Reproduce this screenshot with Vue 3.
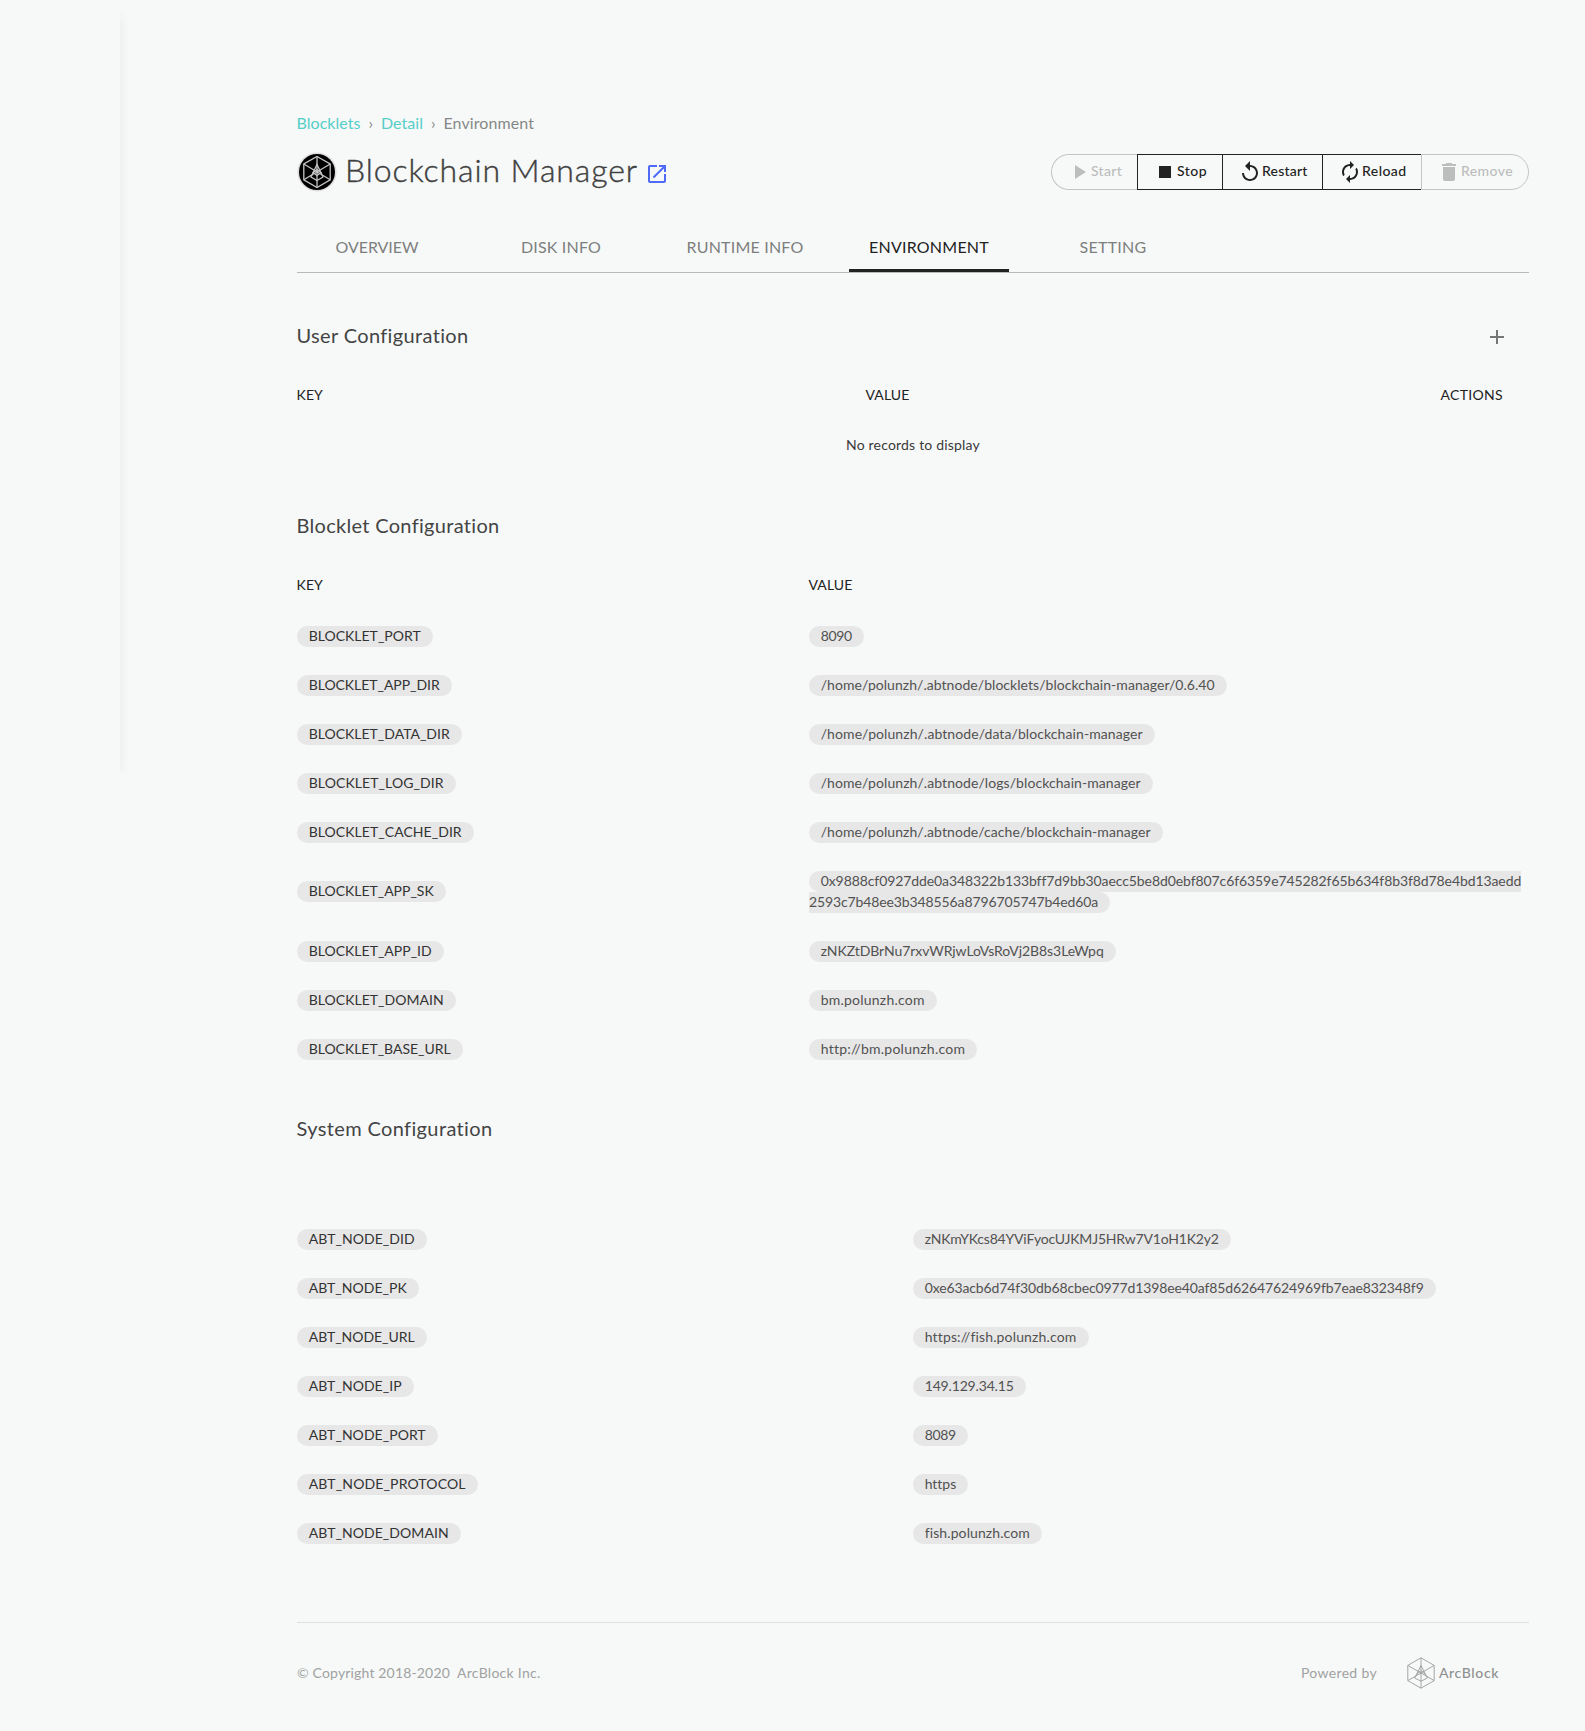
<script setup>
// Spreads the letters of an element so that its text takes the given width.
const vTrack = {
  mounted(el, { value }) {
    const natural = el.getBoundingClientRect().width
    el.style.letterSpacing = `${(value - natural) / el.textContent.length}px`
  },
}

const actions = [
  { label: 'Start', track: 31, disabled: true, icon: 'M8 5v14l11-7z' },
  { label: 'Stop', track: 30, icon: 'M6 6h12v12H6z' },
  {
    label: 'Restart',
    track: 45.5,
    icon: 'M12 5V1L7 6l5 5V7c3.31 0 6 2.69 6 6s-2.69 6-6 6-6-2.69-6-6H4c0 4.42 3.58 8 8 8s8-3.58 8-8-3.58-8-8-8z',
  },
  {
    label: 'Reload',
    track: 44.5,
    icon: 'M12 6v3l4-4-4-4v3c-4.42 0-8 3.58-8 8 0 1.57.46 3.03 1.24 4.26L6.7 14.8c-.45-.83-.7-1.79-.7-2.8 0-3.31 2.69-6 6-6zm6.76 1.74L17.3 9.2c.44.84.7 1.79.7 2.8 0 3.31-2.69 6-6 6v-3l-4 4 4 4v-3c4.42 0 8-3.58 8-8 0-1.57-.46-3.03-1.24-4.26z',
  },
  {
    label: 'Remove',
    track: 52,
    disabled: true,
    icon: 'M6 19c0 1.1.9 2 2 2h8c1.1 0 2-.9 2-2V7H6v12zM19 4h-3.5l-1-1h-5l-1 1H5v2h14V4z',
  },
]

const tabs = [
  { label: 'OVERVIEW', track: 83 },
  { label: 'DISK INFO', track: 80 },
  { label: 'RUNTIME INFO', track: 117 },
  { label: 'ENVIRONMENT', track: 120, active: true },
  { label: 'SETTING', track: 67 },
]

const blockletRows = [
  { key: 'BLOCKLET_PORT', keyTrack: 112, value: [['8090', 31]] },
  { key: 'BLOCKLET_APP_DIR', keyTrack: 131, value: [['/home/polunzh/.abtnode/blocklets/blockchain-manager/0.6.40', 394]] },
  { key: 'BLOCKLET_DATA_DIR', keyTrack: 141, value: [['/home/polunzh/.abtnode/data/blockchain-manager', 322]] },
  { key: 'BLOCKLET_LOG_DIR', keyTrack: 135, value: [['/home/polunzh/.abtnode/logs/blockchain-manager', 320]] },
  { key: 'BLOCKLET_CACHE_DIR', keyTrack: 153, value: [['/home/polunzh/.abtnode/cache/blockchain-manager', 330]] },
  {
    key: 'BLOCKLET_APP_SK',
    keyTrack: 125,
    value: [
      ['0x9888cf0927dde0a348322b133bff7d9bb30aecc5be8d0ebf807c6f6359e745282f65b634f8b3f8d78e4bd13aedd', 700],
      ['2593c7b48ee3b348556a8796705747b4ed60a', 289],
    ],
  },
  { key: 'BLOCKLET_APP_ID', keyTrack: 123, value: [['zNKZtDBrNu7rxvWRjwLoVsRoVj2B8s3LeWpq', 283]] },
  { key: 'BLOCKLET_DOMAIN', keyTrack: 135, value: [['bm.polunzh.com', 104]] },
  { key: 'BLOCKLET_BASE_URL', keyTrack: 142, value: [['http://bm.polunzh.com', 144]] },
]

const systemRows = [
  { key: 'ABT_NODE_DID', keyTrack: 106, value: [['zNKmYKcs84YViFyocUJKMJ5HRw7V1oH1K2y2', 294]] },
  { key: 'ABT_NODE_PK', keyTrack: 98, value: [['0xe63acb6d74f30db68cbec0977d1398ee40af85d62647624969fb7eae832348f9', 499]] },
  { key: 'ABT_NODE_URL', keyTrack: 106, value: [['https://fish.polunzh.com', 151]] },
  { key: 'ABT_NODE_IP', keyTrack: 93, value: [['149.129.34.15', 89]] },
  { key: 'ABT_NODE_PORT', keyTrack: 117, value: [['8089', 31]] },
  { key: 'ABT_NODE_PROTOCOL', keyTrack: 157, value: [['https', 31]] },
  { key: 'ABT_NODE_DOMAIN', keyTrack: 140, value: [['fish.polunzh.com', 105]] },
]

const tables = [
  { name: 'blocklet', rows: blockletRows },
  { name: 'system', rows: systemRows },
]
</script>

<template>
  <div class="page">
    <aside class="sidebar"></aside>
    <main class="content">
      <nav class="breadcrumb">
        <a v-track="64">Blocklets</a>
        <i>›</i>
        <a v-track="42">Detail</a>
        <i>›</i>
        <span v-track="90.5">Environment</span>
      </nav>

      <header class="header">
        <svg class="avatar" viewBox="0 0 40 40">
          <circle cx="20" cy="20" r="19.6" fill="#dedede" />
          <circle cx="20" cy="20" r="18" fill="#000" />
          <g fill="none" stroke="#c4c4c4" stroke-width="1.3">
            <path d="M20 4.5 33.2 12v15.8L20 35.5 6.8 27.8V12z" />
            <path d="M20 4.5v31M6.8 12 33.2 27.8M33.2 12 6.8 27.8" />
            <path d="M20 12.5 14 25l6 3.5 6-3.5z" />
            <path d="M16 20.5l4-3 4 3-4 3z" />
          </g>
        </svg>
        <h1><span v-track="293">Blockchain Manager</span></h1>
        <svg class="open" viewBox="0 0 24 24">
          <path d="M19 19H5V5h7V3H5c-1.11 0-2 .9-2 2v14c0 1.1.89 2 2 2h14c1.1 0 2-.9 2-2v-7h-2v7zM14 3v2h3.590l-9.830 9.830 1.410 1.410L19 6.410V10h2V3h-7z" />
        </svg>
        <div class="actions">
          <button v-for="a in actions" :key="a.label" :class="['action', a.label.toLowerCase(), { disabled: a.disabled }]">
            <svg viewBox="0 0 24 24"><path :d="a.icon" /></svg>
            <span v-track="a.track">{{ a.label }}</span>
          </button>
        </div>
      </header>

      <div class="tabs">
        <div v-for="t in tabs" :key="t.label" :class="['tab', { active: t.active }]">
          <span v-track="t.track">{{ t.label }}</span>
        </div>
      </div>

      <section class="user">
        <div class="section-head">
          <h2><span v-track="172">User Configuration</span></h2>
          <svg class="add" viewBox="0 0 24 24"><path d="M19 13h-6v6h-2v-6H5v-2h6V5h2v6h6v2z" /></svg>
        </div>
        <div class="columns user-columns">
          <div><span v-track="26.5">KEY</span></div>
          <div><span v-track="44">VALUE</span></div>
          <div class="right"><span v-track="62.5">ACTIONS</span></div>
        </div>
        <p class="empty"><span v-track="134">No records to display</span></p>
      </section>

      <section v-for="t in tables" :key="t.name" :class="t.name">
        <h2>
          <span v-if="t.name === 'blocklet'" v-track="203">Blocklet Configuration</span>
          <span v-else v-track="196">System Configuration</span>
        </h2>
        <div class="columns">
          <template v-if="t.name === 'blocklet'">
            <div class="key-col"><span v-track="26.5">KEY</span></div>
            <div><span v-track="44">VALUE</span></div>
          </template>
        </div>
        <div v-for="r in t.rows" :key="r.key" class="row">
          <div class="key-col">
            <div class="pill key"><span v-track="r.keyTrack">{{ r.key }}</span></div>
          </div>
          <div class="values">
            <div v-for="(line, i) in r.value" :key="i" :class="['pill', { opens: r.value.length > 1 && i === 0, closes: i > 0 }]">
              <span v-track="line[1]">{{ line[0] }}</span>
            </div>
          </div>
        </div>
      </section>

      <footer class="footer">
        <span v-track="153">© Copyright 2018-2020</span>
        <span v-track="83.5" class="company">ArcBlock Inc.</span>
        <span v-track="76" class="powered">Powered by</span>
        <svg class="logo" viewBox="0 0 28 32">
          <g fill="none" stroke="#9b9d9c" stroke-width="0.9">
            <path d="M14 .8 27.2 8.4v15.2L14 31.2.8 23.6V8.4z" />
            <path d="M14 .8v30.4M.8 8.4l26.4 15.2M27.2 8.4.8 23.6" />
            <path d="M14 8.5 7.6 21l6.4 3.2 6.4-3.2z" />
            <path d="M9.5 17.5 14 13.5l4.5 4" />
          </g>
        </svg>
        <b v-track="60">ArcBlock</b>
      </footer>
    </main>
  </div>
</template>

<style>
body {
  margin: 0;
  background: #f7f9f8;
}
</style>

<style scoped>
.page {
  display: flex;
  height: 1731px;
  overflow: hidden;
  background: #f7f9f8;
  font-family: Lato, "Liberation Sans", sans-serif;
  font-size: 14px;
  line-height: 20px;
  color: #222;
  white-space: nowrap;
}
.sidebar {
  flex: none;
  width: 120px;
  height: 757px;
  margin-top: 16px;
  box-shadow: 2px 0 10px rgba(0, 0, 0, 0.05);
  clip-path: inset(-10px -16px 0 120px);
}
.content {
  width: 1232px;
  margin-left: 177px;
  padding-top: 111px;
}
.breadcrumb {
  display: flex;
  height: 24px;
  margin-left: -0.5px;
  font-size: 16px;
  line-height: 24px;
  color: #868887;
}
.breadcrumb a {
  color: #55cec8;
}
.breadcrumb i {
  width: 20.5px;
  text-align: center;
  font-style: normal;
}
.header {
  display: flex;
  height: 36px;
  margin-top: 19px;
}
.avatar {
  width: 40px;
  height: 40px;
  margin-top: -2px;
}
h1,
h2,
p {
  margin: 0;
}
h1 {
  width: 292px;
  margin-left: 8px;
  font-size: 32px;
  font-weight: 300;
  line-height: 31px;
  color: #404040;
  -webkit-text-stroke: 0.4px #404040;
}
.open {
  width: 24px;
  height: 24px;
  margin: 8px 0 0 8px;
  fill: #4f6af6;
}
.actions {
  display: flex;
  margin-left: auto;
}
.action {
  display: flex;
  box-sizing: border-box;
  height: 36px;
  padding: 5px 0 0 15px;
  border: solid #222;
  border-width: 1px 0 1px 1px;
  background: none;
  font: 500 14px/22px Lato, sans-serif;
  color: #222;
}
.action svg {
  flex: none;
  width: 24px;
  height: 24px;
  fill: currentColor;
}
.action.disabled {
  border-color: #c3c5c4;
  color: #bcbdbd;
}
.start {
  width: 86px;
  border-radius: 18px 0 0 18px;
}
.stop {
  width: 85px;
}
.restart {
  width: 100px;
}
.reload {
  width: 99px;
}
.remove {
  width: 108px;
  border-right-width: 1px;
  border-radius: 0 18px 18px 0;
}
.tabs {
  display: flex;
  gap: 24px;
  height: 48px;
  margin-top: 34px;
  border-bottom: 1px solid #b9bbba;
}
.tab {
  box-sizing: border-box;
  width: 160px;
  height: 48px;
  font-size: 16px;
  line-height: 45px;
  text-align: center;
  color: #7d7f7e;
}
.tab.active {
  border-bottom: 3px solid #222;
  color: #222;
}
h2 {
  height: 32px;
  margin-left: -0.5px;
  font-size: 20px;
  font-weight: 400;
  line-height: 33px;
  color: #444;
}
.user {
  height: 190px;
  padding-top: 46px;
}
.section-head {
  display: flex;
  justify-content: space-between;
}
.add {
  width: 24px;
  height: 24px;
  margin: 6px 20px 0 0;
  fill: #757776;
}
.columns {
  display: flex;
  height: 20px;
  margin: 34px 0 0 -0.5px;
  font-weight: 400;
}
.user-columns > div {
  width: 569px;
}
.user-columns > .right {
  width: auto;
  margin-left: auto;
  padding-right: 26px;
}
.empty {
  margin-top: 30px;
  text-align: center;
  color: #3a3a3a;
}
.blocklet .key-col {
  width: 512px;
}
.blocklet .columns,
.system .columns {
  margin-bottom: 17px;
}
.system {
  margin-top: 38px;
}
.system .key-col {
  width: 616px;
}
.row {
  display: flex;
  align-items: center;
  padding: 14px 0;
}
.key-col {
  flex: none;
}
.values {
  display: flex;
  flex-direction: column;
  align-items: flex-start;
}
.row:has(.closes) .pill.key {
  margin-bottom: 1px;
}
.pill {
  box-sizing: border-box;
  width: max-content;
  height: 21px;
  padding: 0 12.3px 0 11.7px;
  border-radius: 10.5px;
  background: #e7e7e7;
  line-height: 19px;
  color: #525252;
}
.pill.key {
  color: #333;
}
.pill.opens {
  padding-right: 0.3px;
  border-radius: 10.5px 0 0 10.5px;
}
.pill.closes {
  padding-left: 0;
  border-radius: 0 10.5px 10.5px 0;
}
.footer {
  display: flex;
  height: 108px;
  margin-top: 64px;
  border-top: 1px solid #dee0e4;
  line-height: 99px;
  color: #a0a2a1;
}
.company {
  margin-left: 7px;
}
.powered {
  margin-left: auto;
}
.logo {
  width: 28px;
  height: 32px;
  margin: 34px 0 0 30px;
}
.footer b {
  margin: 0 30px 0 4px;
  font-weight: 500;
  color: #8e908f;
}
</style>
